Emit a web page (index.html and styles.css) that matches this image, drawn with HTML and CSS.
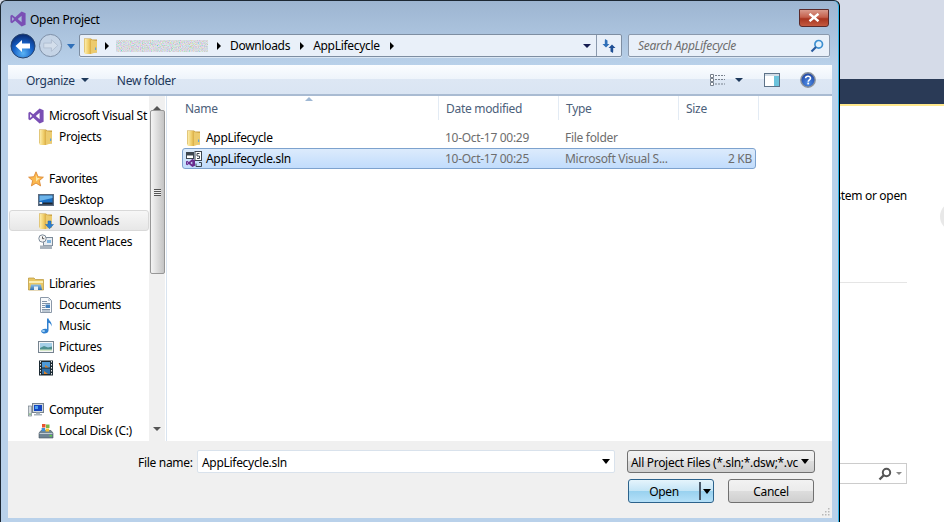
FILE: index.html
```html
<!DOCTYPE html>
<html lang="en">
<head>
    <meta charset="UTF-8">
    <meta name="viewport" content="width=device-width, initial-scale=1.0">
    <title>Open Project</title>
    <link rel="stylesheet" href="styles.css">
</head>
<body>

    <svg class="defs" aria-hidden="true">
        <defs>
            <linearGradient id="fold" x1="0" y1="0" x2="1" y2="0">
                <stop offset="0" stop-color="#fdf0b4"/>
                <stop offset="0.6" stop-color="#f0cf6c"/>
                <stop offset="1" stop-color="#d9ac45"/>
            </linearGradient>
            <linearGradient id="sky" x1="0" y1="0" x2="0" y2="1">
                <stop offset="0" stop-color="#8fc1e8"/>
                <stop offset="1" stop-color="#2f6fae"/>
            </linearGradient>
            <radialGradient id="backball" cx="0.5" cy="0.8" r="0.75">
                <stop offset="0" stop-color="#5ab4f5"/>
                <stop offset="0.55" stop-color="#1561c8"/>
                <stop offset="1" stop-color="#0b2f78"/>
            </radialGradient>
            <radialGradient id="helpball" cx="0.5" cy="0.7" r="0.7">
                <stop offset="0" stop-color="#4f8fe8"/>
                <stop offset="1" stop-color="#1b3f9e"/>
            </radialGradient>
            <filter id="speckle" x="0" y="0" width="100%" height="100%">
                <feTurbulence type="fractalNoise" baseFrequency="0.9" numOctaves="2" seed="4"/>
                <feColorMatrix type="saturate" values="1.6"/>
                <feComponentTransfer>
                    <feFuncA type="linear" slope="1.6"/>
                </feComponentTransfer>
            </filter>

            <symbol id="i-vs" viewBox="0 0 16 16">
                <path fill="#7a4fb5" fill-rule="evenodd" d="M11.6 0.4L15.6 2.2V13.8L11.6 15.6L5.2 9.7L2 12.2L0.4 11.3V4.7L2 3.8L5.2 6.3ZM11.6 4.8L7.8 8L11.6 11.2ZM2.1 6V10L4.1 8Z"/>
            </symbol>
            <symbol id="i-folder" viewBox="0 0 16 16">
                <path fill="#c99f3f" d="M1 0.5H8L9 1.5H14V14.5H1Z"/>
                <path fill="url(#fold)" d="M1.5 1H8V16H1.5Z"/>
                <path fill="#eccb6e" d="M8 2L14 3V14L8 16Z"/>
                <path fill="#5fa3dc" d="M12 9.500h1.200v2.500H12z"/>
            </symbol>
            <symbol id="i-downloads" viewBox="0 0 16 16">
                <path fill="#c99f3f" d="M1 0.5H8L9 1.5H14V14.5H1Z"/>
                <path fill="url(#fold)" d="M1.5 1H8V16H1.5Z"/>
                <path fill="#eccb6e" d="M8 2L14 3V14L8 16Z"/>
                <path fill="#2b7fd0" stroke="#1a5ea8" stroke-width="0.5" d="M10 8H13V11.500H15.500L11.500 15.800L7.500 11.500H10Z"/>
            </symbol>
            <symbol id="i-star" viewBox="0 0 16 16">
                <path fill="#fbb84e" stroke="#d9822b" stroke-width="0.8" d="M8 0.8L10.1 5.7L15.4 6.2L11.4 9.6L12.6 14.9L8 12.1L3.4 14.9L4.6 9.6L0.6 6.2L5.9 5.7Z"/>
                <path fill="#fde9a8" d="M8 4L9.2 7H12L8 10.5Z"/>
            </symbol>
            <symbol id="i-desktop" viewBox="0 0 16 16">
                <rect x="0.5" y="2.5" width="15" height="11" fill="#3c4b5f" stroke="#5a6b80"/>
                <rect x="1.5" y="3.5" width="13" height="8" fill="#1a6fc4"/>
                <path fill="#6cb4ea" d="M1.5 3.5H14.5V6L1.5 9Z"/>
                <rect x="5" y="10.5" width="9.5" height="1.5" fill="#20262e"/>
                <rect x="1.5" y="10" width="2.5" height="2" fill="#e8e8e8"/>
            </symbol>
            <symbol id="i-recent" viewBox="0 0 16 16">
                <rect x="5.5" y="3.5" width="9" height="8" fill="#e8edf2" stroke="#7c8a99"/>
                <rect x="9" y="6" width="4" height="3" fill="#7cb2dd"/>
                <path fill="#a9b3bd" d="M2 11.5H14V15H2Z"/>
                <circle cx="4.5" cy="4.5" r="3.7" fill="#f4f4f4" stroke="#7c8a99"/>
                <path fill="none" stroke="#555" d="M4.5 2.5V4.7H6.3"/>
            </symbol>
            <symbol id="i-library" viewBox="0 0 16 16">
                <path fill="#e8c765" stroke="#b89438" stroke-width="0.7" d="M0.5 2H6L7.5 3.5H15.5V14H0.5Z"/>
                <path fill="#fbeeb2" d="M1 5H15V7H1Z"/>
                <path fill="url(#sky)" d="M3 8.5H13L14 14H2Z"/>
                <path fill="#e6f0f8" d="M6 10.5H10V14H6Z"/>
            </symbol>
            <symbol id="i-doc" viewBox="0 0 16 16">
                <path fill="#f8fafc" stroke="#8b98a8" d="M2.5 0.5H10.5L13.500 3.500V15.500H2.500Z"/>
                <path fill="#c6d1dc" d="M10 1L13 4H10Z"/>
                <path stroke="#7f93a8" d="M4 4.5H9M4 6.5H12M4 12.5H12M4 14H12"/>
                <rect x="7.5" y="7.5" width="4.5" height="3.5" fill="#3f7fbe"/>
                <path stroke="#7f93a8" d="M4 8.5H7M4 10.5H7"/>
            </symbol>
            <symbol id="i-music" viewBox="0 0 16 16">
                <path fill="#2f80d0" d="M9 0.5H10.5C11 3 14.5 4 13.500 8.500C13 5.800 11.800 5 10.500 4.800V12.500C10.500 14.500 8 16 5.500 15.500C3 15 2.500 13 4 11.800C5.500 10.600 8 10.500 9 11.200Z"/>
                <ellipse cx="5.5" cy="13" rx="1.6" ry="1" fill="#a6d3f5"/>
            </symbol>
            <symbol id="i-pictures" viewBox="0 0 16 16">
                <rect x="0.5" y="2.5" width="15" height="11" fill="#f4f6f8" stroke="#76838f"/>
                <rect x="2" y="4" width="12" height="8" fill="#a5cfe8"/>
                <path fill="#4d8f90" d="M2 9L6 7L10 8.5L14 7.5V12H2Z"/>
                <path fill="#d7e9c8" d="M2 10.5H14V12H2Z"/>
            </symbol>
            <symbol id="i-videos" viewBox="0 0 16 16">
                <rect x="1" y="0.5" width="14" height="15" fill="#1c2a33"/>
                <rect x="4" y="2" width="8" height="5.5" fill="#4e9ad8"/>
                <rect x="4" y="8.5" width="8" height="5.5" fill="#2f6fa8"/>
                <path fill="#d9822b" d="M7 5L11 7.5H7ZM6 11L10 14H6Z"/>
                <path stroke="#e8e8e8" stroke-dasharray="1.5 1.5" d="M2.5 1V15.5M13.5 1V15.5"/>
            </symbol>
            <symbol id="i-computer" viewBox="0 0 16 16">
                <rect x="0.5" y="4" width="3" height="10" fill="#d7dce0" stroke="#77838e" stroke-width="0.7"/>
                <rect x="4.5" y="1.5" width="11" height="9" fill="#cfd6dc" stroke="#77838e"/>
                <rect x="6" y="3" width="8" height="6" fill="#1546c0"/>
                <path fill="#4fa0ec" d="M7 4H10V7H7Z"/>
                <path fill="#aab4bc" d="M8 10.5H12V12H14V13.5H6V12H8Z"/>
                <rect x="1.3" y="11.5" width="1.4" height="1.2" fill="#52b043"/>
            </symbol>
            <symbol id="i-disk" viewBox="0 0 16 16">
                <path fill="#6f8493" stroke="#46545f" stroke-width="0.6" d="M1 10L3 7.5H13L15 10V15H1Z"/>
                <path fill="#c0ccd4" d="M1.5 10H14.5V11H1.5Z"/>
                <rect x="11.5" y="12" width="2.5" height="1.5" fill="#5ed04a"/>
                <rect x="4" y="1" width="3.5" height="3.5" fill="#e8542f"/>
                <rect x="8" y="1.5" width="3.5" height="3.5" fill="#7ab648"/>
                <rect x="3.6" y="5" width="3.5" height="3.2" fill="#3f8fd8"/>
                <rect x="7.6" y="5.5" width="3.5" height="3" fill="#f5c330"/>
            </symbol>
            <symbol id="i-sln" viewBox="0 0 16 16">
                <rect x="0.5" y="1.5" width="7" height="6" fill="#fff" stroke="#3c4650"/>
                <rect x="1" y="2" width="6" height="2.500" fill="#3c4650"/>
                <rect x="9" y="0.5" width="6.5" height="9" fill="#fff" stroke="#3c4650"/>
                <path stroke="#3c4650" fill="none" d="M13.5 2.5H11V5H13.5V7.5H11"/>
                <path stroke="#3c4650" fill="none" d="M10 12.500V15.500H15.500V11.500H13"/>
                <path fill="#6a2a8e" fill-rule="evenodd" d="M6.3 8L9 9.2V14.8L6.3 16L2.8 13L1.2 14.2L0 13.5V10.5L1.2 9.8L2.8 11ZM6.3 10.4L4.4 12L6.3 13.6ZM1.2 11.1V12.9L2.2 12Z"/>
            </symbol>
        </defs>
    </svg>

    <!-- the application behind the dialog -->
    <div class="app">
        <div class="app-top"></div>
        <div class="app-bar"></div>
        <div class="app-content">
            <p class="app-text">Create a new system or open</p>
            <div class="app-rule"></div>
            <div class="app-search">
                <svg class="app-lens" viewBox="0 0 14 14"><circle cx="8.5" cy="5.5" r="3.7" fill="none" stroke="#555" stroke-width="2"/><path d="M6 8L1.5 12.5" stroke="#555" stroke-width="2.4"/></svg>
                <span class="app-caret"></span>
            </div>
        </div>
    </div>
    <div class="app-blob"></div>

    <div class="dialog">
        <div class="titlebar">
            <svg class="ico"><use href="#i-vs"/></svg>
            <span class="title">Open Project</span>
            <div class="close">
                <svg viewBox="0 0 12 9" class="close-x"><path d="M1.5 0.8L10.5 8.2M10.5 0.8L1.5 8.2" stroke="#fff" stroke-width="2.4"/></svg>
            </div>
        </div>

        <div class="addressrow">
            <svg class="nav-btn back" viewBox="0 0 26 26">
                <circle cx="13" cy="13" r="12" fill="url(#backball)" stroke="#28456e"/>
                <path d="M5.500 13L12 7V10.500H20V15.500H12V19Z" fill="#fff"/>
            </svg>
            <svg class="nav-btn forward" viewBox="0 0 26 26">
                <circle cx="13" cy="13" r="11.5" fill="#c5d4e6" stroke="#7c8ea6"/>
                <path d="M20.500 13L14 7V10.500H6V15.500H14V19Z" fill="#d3deeb" stroke="#a7b6c9" stroke-width="0.7"/>
            </svg>
            <span class="nav-drop"></span>

            <div class="addressbox">
                <svg class="ico crumb-icon"><use href="#i-folder"/></svg>
                <span class="crumb-arrow"></span>
                <svg class="blurred" width="92" height="12"><rect width="92" height="12" filter="url(#speckle)"/></svg>
                <span class="crumb-arrow"></span>
                <span class="crumb">Downloads</span>
                <span class="crumb-arrow"></span>
                <span class="crumb">AppLifecycle</span>
                <span class="crumb-arrow"></span>
                <span class="address-drop"></span>
                <div class="refresh">
                    <svg viewBox="0 0 16 16" width="16" height="16">
                        <path d="M4 1L6.500 2.500V6H8.500L5 9.500L1.500 6H3.800V3Z" fill="#2f6fb8"/>
                        <path d="M12 15L9.500 13.500V10H7.500L11 6.500L14.500 10H12.200V13Z" fill="#1f4f94"/>
                    </svg>
                </div>
            </div>

            <div class="searchbox">
                <span class="search-text">Search AppLifecycle</span>
                <svg class="lens" viewBox="0 0 14 14">
                    <circle cx="8.7" cy="5.3" r="3.8" fill="#e4f1fb" stroke="#3d8fd0" stroke-width="1.7"/>
                    <path d="M6 8L1.5 12.5" stroke="#2a5a9e" stroke-width="2.2"/>
                </svg>
            </div>
        </div>

        <div class="toolbar">
            <span class="tool">Organize</span>
            <span class="caret organize-caret"></span>
            <span class="tool newfolder">New folder</span>
            <svg class="views" viewBox="0 0 15 13">
                <path fill="#fff" stroke="#77808c" d="M0.5 0.5h3v3h-3zM0.5 4.5h3v3h-3zM0.5 8.5h3v3h-3z"/>
                <path stroke="#77808c" stroke-dasharray="2 1" d="M5 1.5H15M5 5.5H15M5 10H15"/>
            </svg>
            <span class="caret views-caret"></span>
            <svg class="pane" viewBox="0 0 16 14">
                <rect x="0.5" y="0.5" width="15" height="13" fill="#fff" stroke="#5d7288"/>
                <rect x="10" y="1" width="5" height="12" fill="#6cc3dc"/>
                <rect x="1" y="1" width="14" height="2" fill="#d2dce6"/>
            </svg>
            <svg class="help" viewBox="0 0 16 16">
                <circle cx="8" cy="8" r="7.2" fill="url(#helpball)" stroke="#8d949c" stroke-width="1.4"/>
                <path d="M5.6 6.2C5.8 3.4 10.6 3.6 10.5 6.3C10.4 8 8.3 8 8.2 9.8" fill="none" stroke="#fff" stroke-width="1.6"/>
                <rect x="7.3" y="10.6" width="1.8" height="1.8" fill="#fff"/>
            </svg>
        </div>

        <div class="main">
            <div class="navpane">
                <div class="navgroup">
                    <div class="navitem head"><svg class="ico"><use href="#i-vs"/></svg>Microsoft Visual St</div>
                    <div class="navitem"><svg class="ico"><use href="#i-folder"/></svg>Projects</div>
                </div>
                <div class="navgroup">
                    <div class="navitem head"><svg class="ico"><use href="#i-star"/></svg>Favorites</div>
                    <div class="navitem"><svg class="ico"><use href="#i-desktop"/></svg>Desktop</div>
                    <div class="navitem selected"><svg class="ico"><use href="#i-downloads"/></svg>Downloads</div>
                    <div class="navitem"><svg class="ico"><use href="#i-recent"/></svg>Recent Places</div>
                </div>
                <div class="navgroup">
                    <div class="navitem head"><svg class="ico"><use href="#i-library"/></svg>Libraries</div>
                    <div class="navitem"><svg class="ico"><use href="#i-doc"/></svg>Documents</div>
                    <div class="navitem"><svg class="ico"><use href="#i-music"/></svg>Music</div>
                    <div class="navitem"><svg class="ico"><use href="#i-pictures"/></svg>Pictures</div>
                    <div class="navitem"><svg class="ico"><use href="#i-videos"/></svg>Videos</div>
                </div>
                <div class="navgroup">
                    <div class="navitem head"><svg class="ico"><use href="#i-computer"/></svg>Computer</div>
                    <div class="navitem"><svg class="ico"><use href="#i-disk"/></svg>Local Disk (C:)</div>
                </div>
            </div>

            <div class="scrollbar">
                <span class="sb-up"></span>
                <div class="sb-thumb"><span class="sb-grip"></span></div>
                <span class="sb-down"></span>
            </div>

            <div class="filelist">
                <div class="columns">
                    <div class="col col-name">Name<span class="sort"></span></div>
                    <div class="col col-date">Date modified</div>
                    <div class="col col-type">Type</div>
                    <div class="col col-size">Size</div>
                </div>
                <div class="row">
                    <svg class="ico"><use href="#i-folder"/></svg>
                    <span class="cell-name">AppLifecycle</span>
                    <span class="cell-date">10-Oct-17 00:29</span>
                    <span class="cell-type">File folder</span>
                    <span class="cell-size"></span>
                </div>
                <div class="row selected-row">
                    <svg class="ico"><use href="#i-sln"/></svg>
                    <span class="cell-name">AppLifecycle.sln</span>
                    <span class="cell-date">10-Oct-17 00:25</span>
                    <span class="cell-type">Microsoft Visual S...</span>
                    <span class="cell-size">2 KB</span>
                </div>
            </div>
        </div>

        <div class="footer">
            <div class="footer-row">
                <label class="fname-label">File name:</label>
                <div class="fname"><span class="nudge">AppLifecycle.sln</span><span class="black-caret"></span></div>
                <div class="filter"><span class="nudge">All Project Files (*.sln;*.dsw;*.vc</span><span class="black-caret"></span></div>
            </div>
            <div class="footer-row buttons">
                <div class="btn open"><span class="open-label">Open</span><span class="open-split"></span><span class="black-caret"></span></div>
                <div class="btn">Cancel</div>
            </div>
            <svg class="grip" viewBox="0 0 10 8"><path fill="#b8b8b8" d="M8 0h1.500v1.500H8zM5 3h1.500v1.500H5zM8 3h1.500v1.500H8zM2 6h1.500v1.500H2zM5 6h1.500v1.500H5zM8 6h1.500v1.500H8z"/></svg>
        </div>
    </div>

</body>
</html>
```

FILE: styles.css
```css
* {
    box-sizing: border-box;
}
html, body {
    margin: 0;
    width: 944px;
    height: 522px;
    overflow: hidden;
}
body {
    position: relative;
    background: #fff;
    font-family: "Noto Sans", "Open Sans", sans-serif;
    font-size: 12px;
    letter-spacing: -0.3px;
    color: #000;
}
.defs {
    position: absolute;
    width: 0;
    height: 0;
}
.ico {
    width: 16px;
    height: 16px;
    flex: none;
}

/* app behind the dialog */
.app-top {
    height: 79px;
    background: #d5dbe8;
}
.app-bar {
    height: 27px;
    background: #2a3a56;
    border-bottom: 2px solid #ffe88c;
}
.app-content {
    padding: 81px 37px 0 0;
    text-align: right;
}
.app-text {
    margin: 0;
    line-height: 18px;
}
.app-rule {
    margin-top: 77px;
    border-top: 1px solid #e5e5e5;
}
.app-search {
    margin-top: 180px;
    height: 21px;
    border: 1px solid #ccc;
    display: flex;
    justify-content: flex-end;
    align-items: center;
    padding-right: 4px;
    gap: 4px;
}
.app-lens {
    width: 14px;
    height: 14px;
}
.app-caret {
    border: 3px solid transparent;
    border-top: 3px solid #888;
    margin-top: 3px;
}
.app-blob {
    position: absolute;
    left: 940px;
    top: 203px;
    width: 24px;
    height: 27px;
    border-radius: 50%;
    background: #e8e8e8;
}

/* dialog window */
.dialog {
    position: absolute;
    left: 0;
    top: 0;
    width: 840px;
    height: 522px;
    display: flex;
    flex-direction: column;
    padding: 0 7px 4px 7px;
    background: linear-gradient(#9db5d1, #b9d1ea 65px);
    border: 1px solid #1c2733;
    border-right-color: #000;
    border-bottom: none;
    border-radius: 6px 6px 0 0;
    box-shadow: inset -1px 0 0 #2fb4e8;
}
.titlebar {
    height: 32px;
    display: flex;
    align-items: center;
    padding: 4px 3px 0 2px;
    flex: none;
}
.title {
    margin-left: 4px;
}
.close {
    margin-left: auto;
    width: 30px;
    height: 18px;
    margin-top: -3px;
    border: 1px solid #5c2a2a;
    border-radius: 0 0 3px 3px;
    background: linear-gradient(#d99a8c, #c5604c 45%, #a83520 55%, #c45a40);
    display: flex;
    align-items: center;
    justify-content: center;
}
.close-x {
    width: 12px;
    height: 9px;
}

.addressrow {
    height: 32px;
    flex: none;
    display: flex;
    align-items: center;
    padding-bottom: 7px;
}
.nav-btn {
    flex: none;
}
.back {
    width: 26px;
    height: 26px;
    margin-left: 2px;
}
.forward {
    width: 25px;
    height: 25px;
    margin-left: 2px;
}
.nav-drop {
    border: 4px solid transparent;
    border-top: 5px solid #2f6fb8;
    margin: 6px 0 0 4px;
}
.addressbox {
    width: 543px;
    height: 23px;
    margin-left: 4px;
    display: flex;
    align-items: center;
    padding-left: 3px;
    background: #e9f0f9;
    border: 1px solid #7e8ea2;
    border-radius: 2px;
    box-shadow: 0 1px 0 #d9e6f4;
    flex: none;
}
.crumb-icon {
    margin-right: -4px;
}
.crumb-arrow {
    width: 0;
    height: 0;
    border: 4px solid transparent;
    border-left: 4px solid #000;
    border-right: none;
    margin: 0 9px 0 10px;
}
.blurred {
    opacity: 0.55;
    margin: 0 -1px 0 -2px;
}
.crumb {
    white-space: nowrap;
}
.address-drop {
    margin-left: auto;
    margin-right: 5px;
    margin-top: 4px;
    border: 4px solid transparent;
    border-top: 4px solid #141c50;
}
.refresh {
    width: 25px;
    height: 100%;
    border-left: 1px solid #8a99ad;
    display: flex;
    align-items: center;
    justify-content: center;
}
.searchbox {
    width: 202px;
    height: 23px;
    margin-left: 6px;
    display: flex;
    align-items: center;
    justify-content: space-between;
    padding: 0 5px 0 9px;
    background: #e9f0f9;
    border: 1px solid #8a99ad;
    border-radius: 2px;
    box-shadow: 0 1px 0 #d9e6f4;
    flex: none;
}
.search-text {
    font-style: italic;
    color: #6d6d6d;
}
.lens {
    width: 14px;
    height: 14px;
}

.toolbar {
    height: 31px;
    flex: none;
    display: flex;
    align-items: center;
    padding-top: 1px;
    color: #1e395b;
    background: linear-gradient(#fbfdff, #eef4fb 48%, #dde7f4 50%, #dae5f3);
    border-bottom: 2px solid #a9bbd2;
}
.tool {
    white-space: nowrap;
}
.toolbar .tool:first-child {
    margin-left: 18px;
}
.caret {
    width: 0;
    height: 0;
    border: 4px solid transparent;
    border-top: 4px solid #1e395b;
    margin-top: 4px;
}
.organize-caret {
    margin-left: 6px;
}
.newfolder {
    margin-left: 28px;
}
.views {
    width: 15px;
    height: 13px;
    margin-left: auto;
}
.views-caret {
    margin-left: 10px;
}
.pane {
    width: 16px;
    height: 14px;
    margin-left: 21px;
}
.help {
    width: 16px;
    height: 16px;
    margin-left: 20px;
    margin-right: 16px;
}

.main {
    flex: 1;
    min-height: 0;
    display: flex;
    background: #fff;
}
.navpane {
    width: 141px;
    flex: none;
    padding: 9px 0 0 1px;
    overflow: hidden;
}
.navgroup {
    margin-bottom: 21px;
}
.navitem {
    height: 21px;
    display: flex;
    align-items: center;
    gap: 5px;
    padding-left: 29px;
    white-space: nowrap;
    border: 1px solid transparent;
    border-left: none;
}
.navitem.head {
    padding-left: 19px;
}
.navitem.selected {
    background: linear-gradient(#f7f7f7, #e7e7e7);
    border: 1px solid #d9d9d9;
    border-radius: 3px;
    padding-left: 28px;
}
.scrollbar {
    width: 18px;
    flex: none;
    display: flex;
    flex-direction: column;
    align-items: center;
    background: #f0f0f0;
    border-right: 1px solid #d9e4f0;
    padding: 6px 1px 6px 0;
    box-shadow: inset -1px 0 0 #fff;
}
.sb-up, .sb-down {
    width: 0;
    height: 0;
    border: 4px solid transparent;
}
.sb-up {
    border-bottom: 4px solid #555;
}
.sb-down {
    margin-top: auto;
    border-top: 4px solid #555;
}
.sb-thumb {
    width: 15px;
    height: 164px;
    border: 1px solid #979797;
    border-radius: 2px;
    background: linear-gradient(90deg, #f4f4f4, #dcdcdc 50%, #c4c4c4);
    display: flex;
    align-items: center;
    justify-content: center;
}
.sb-grip {
    width: 7px;
    height: 7px;
    background: repeating-linear-gradient(#555 0 1px, #eee 1px 2px);
}
.filelist {
    flex: 1;
}
.columns {
    height: 24px;
    display: flex;
    align-items: center;
    color: #4c607a;
    margin-bottom: 7px;
}
.col {
    height: 100%;
    display: flex;
    align-items: center;
    padding-left: 7px;
    border-right: 1px solid #e3ebf4;
    position: relative;
}
.col-name {
    width: 272px;
    padding-left: 18px;
}
.col-date, .col-type {
    width: 120px;
}
.col-size {
    width: 80px;
}
.sort {
    position: absolute;
    left: 138px;
    top: 1px;
    border: 4px solid transparent;
    border-top: none;
    border-bottom: 4px solid #9fb8d4;
}
.row {
    width: 574px;
    height: 21px;
    margin-left: 15px;
    display: flex;
    align-items: center;
    padding: 0 3px;
    border: 1px solid transparent;
    border-radius: 3px;
    color: #6d6d6d;
    white-space: nowrap;
}
.selected-row {
    background: linear-gradient(#dcebfc, #c1dcfc);
    border-color: #7da2ce;
}
.cell-name {
    color: #000;
    margin-left: 4px;
    width: 239px;
}
.cell-date {
    width: 120px;
}
.cell-type {
    width: 120px;
}
.cell-size {
    flex: 1;
    text-align: right;
}

.footer {
    height: 77px;
    flex: none;
    position: relative;
    background: #f0f0f0;
    padding-top: 9px;
}
.footer-row {
    display: flex;
    align-items: center;
    padding-left: 130px;
}
.fname-label {
    width: 54px;
    margin-right: 5px;
    white-space: nowrap;
    padding-top: 1px;
}
.nudge {
    padding-top: 1px;
}
.fname {
    width: 418px;
    height: 23px;
    display: flex;
    align-items: center;
    justify-content: space-between;
    padding: 0 4px;
    background: #fff;
    border: 1px solid #d9e2ec;
    border-radius: 2px;
}
.black-caret {
    width: 0;
    height: 0;
    border: 4px solid transparent;
    border-top: 5px solid #000;
    border-bottom: none;
    flex: none;
}
.filter {
    width: 188px;
    height: 23px;
    margin-left: 12px;
    display: flex;
    align-items: center;
    justify-content: space-between;
    padding: 0 5px 0 3px;
    white-space: nowrap;
    overflow: hidden;
    background: linear-gradient(#f2f2f2, #ebebeb 48%, #dddddd 50%, #cfcfcf);
    border: 1px solid #707070;
    border-radius: 3px;
}
.buttons {
    margin-top: 6px;
    padding: 0 18px 0 0;
    justify-content: flex-end;
    gap: 14px;
}
.btn {
    width: 86px;
    height: 24px;
    display: flex;
    align-items: center;
    justify-content: center;
    background: linear-gradient(#f2f2f2, #ebebeb 48%, #dddddd 50%, #cfcfcf);
    border: 1px solid #707070;
    border-radius: 3px;
}
.btn.open {
    justify-content: flex-start;
    background: linear-gradient(#e5f4fc, #c4e5f6 48%, #98d1ef 50%, #b5e0f8);
    border-color: #2c628b;
}
.open-label {
    width: 70px;
    text-align: center;
}
.open-split {
    width: 2px;
    height: 18px;
    background: #4a5a6a;
    margin-right: 2px;
}
.grip {
    position: absolute;
    right: 2px;
    bottom: 2px;
    width: 10px;
    height: 8px;
}
```
